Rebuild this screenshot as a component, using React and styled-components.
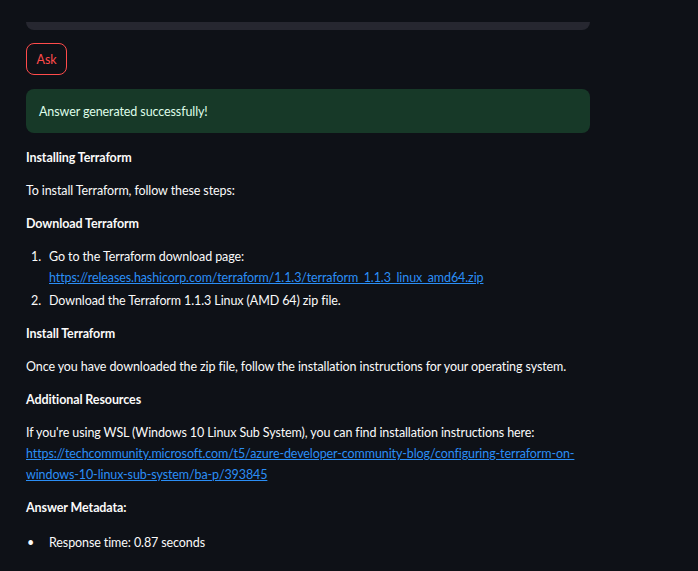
import React from 'react';
import styled, { createGlobalStyle } from 'styled-components';

const GlobalStyle = createGlobalStyle`
    html, body {
        margin: 0;
        padding: 0;
        background: #0e1117;
    }
    body {
        font-family: Lato, "Liberation Sans", sans-serif;
        color: #fafafa;
        -webkit-font-smoothing: antialiased;
    }
`

const App = () => {
    return (
        <Page>
            <GlobalStyle />
            <Main>
                <InputBottom />
                <AskButton>Ask</AskButton>
                <SuccessBox>Answer generated successfully!</SuccessBox>
                <Markdown>
                    <Heading>Installing Terraform</Heading>
                    <Para>To install Terraform, follow these steps:</Para>
                    <Heading>Download Terraform</Heading>
                    <NumberedList>
                        <li>
                            Go to the Terraform download page:{' '}
                            <Link href="#">https://releases.hashicorp.com/terraform/1.1.3/terraform_1.1.3_linux_amd64.zip</Link>
                        </li>
                        <li>Download the Terraform 1.1.3 Linux (AMD 64) zip file.</li>
                    </NumberedList>
                    <Heading>Install Terraform</Heading>
                    <Para>Once you have downloaded the zip file, follow the installation instructions for your operating system.</Para>
                    <Heading>Additional Resources</Heading>
                    <Para>
                        If you're using WSL (Windows 10 Linux Sub System), you can find installation instructions here:{' '}
                        <Link href="#">https://techcommunity.microsoft.com/t5/azure-developer-community-blog/configuring-terraform-on-windows-10-linux-sub-system/ba-p/393845</Link>
                    </Para>
                    <Heading>Answer Metadata:</Heading>
                    <BulletList>
                        <li>Response time: 0.87 seconds</li>
                    </BulletList>
                </Markdown>
            </Main>
        </Page>
    )
}

export default App

const Page = styled.div`
    min-height: 571px;
    background: #0e1117;
    overflow: hidden;
`

const Main = styled.div`
    width: 564px;
    padding-left: 26px;
    display: flex;
    flex-direction: column;
    align-items: flex-start;
    font-size: 12.5px;
    letter-spacing: -0.1px;
`

const InputBottom = styled.div`
    align-self: stretch;
    height: 8px;
    margin-top: 22px;
    background: #262730;
    border-radius: 0 0 8px 8px;
`

const AskButton = styled.button`
    margin-top: 13px;
    height: 32px;
    width: 41px;
    padding: 0;
    background: transparent;
    border: 1px solid #ff4b4b;
    border-radius: 8px;
    color: #ff4b4b;
    font-family: inherit;
    font-size: 12.5px;
    letter-spacing: -0.1px;
    cursor: pointer;
`

const SuccessBox = styled.div`
    align-self: stretch;
    margin-top: 14px;
    height: 44px;
    padding: 0 13px;
    display: flex;
    align-items: center;
    background: #173928;
    border-radius: 8px;
    color: #dffde9;
`

const Markdown = styled.div`
    align-self: stretch;
    margin-top: 14px;
    line-height: 21px;
`

const Para = styled.p`
    margin: 0 0 12px;
`

const Heading = styled(Para)`
    font-weight: 700;
`

const Link = styled.a`
    color: #2b8ef5;
    text-decoration: underline;
    word-break: break-word;
`

const NumberedList = styled.ol`
    margin: 0 0 12px;
    padding-left: 23px;
    list-style: none;
    counter-reset: step;
    li {
        counter-increment: step;
        margin-bottom: 2px;
    }
    li::before {
        content: counter(step) ".";
        display: inline-block;
        width: 18px;
        margin-left: -18px;
    }
`

const BulletList = styled.ul`
    margin: 14px 0 0;
    padding-left: 23px;
    list-style: none;
    li::before {
        content: "•";
        display: inline-block;
        width: 22px;
        margin-left: -22px;
    }
`
